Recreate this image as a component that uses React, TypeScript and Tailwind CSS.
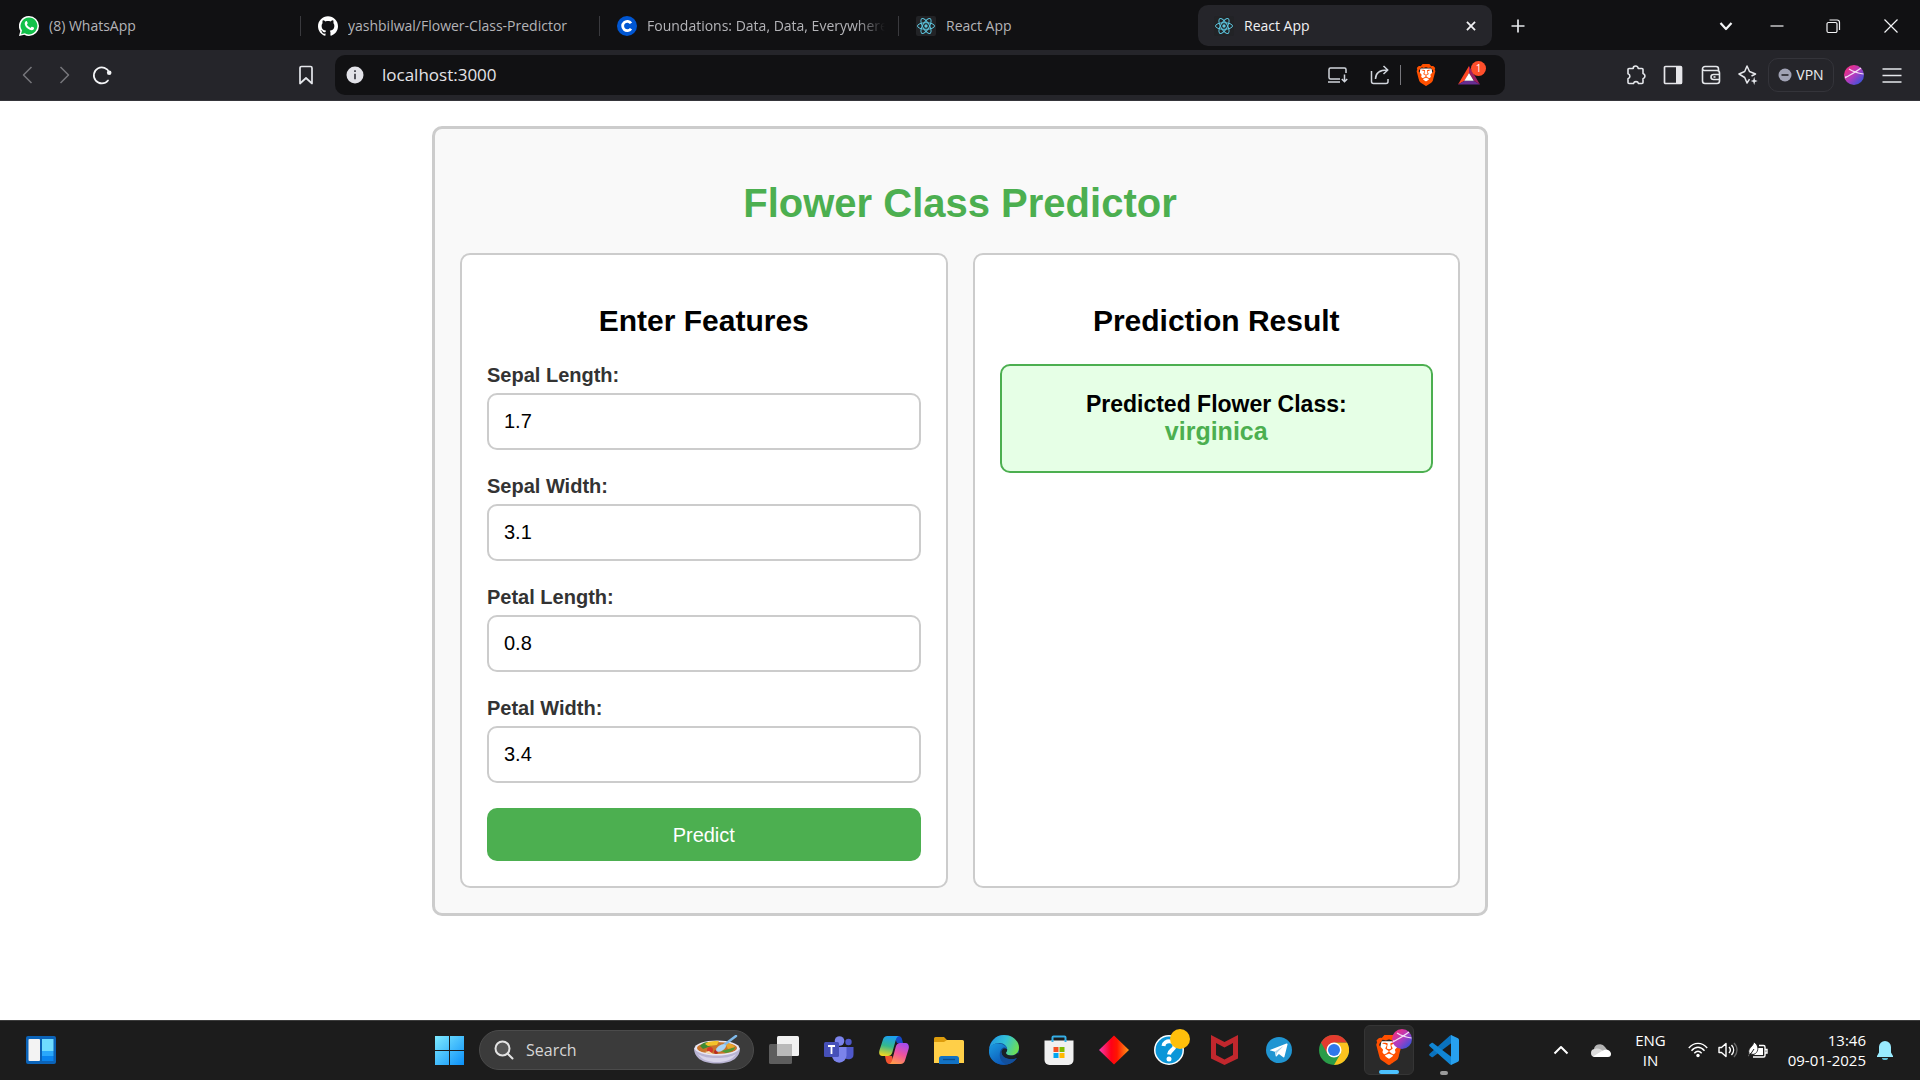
import { useState } from "react";
import type { ReactNode } from "react";
import { SiBrave, SiGithub } from "react-icons/si";

/* ---------- browser icons ---------- */

function WhatsAppIcon() {
  return (
    <svg viewBox="0 0 20 20" className="size-5 shrink-0">
      <path d="M10 0a10 10 0 0 1 0 20 10 10 0 0 1-4.700-1.200L0 20l1.300-5A10 10 0 0 1 10 0z" fill="#fff" />
      <path d="M10 1.400a8.500 8.500 0 1 1-4.300 15.900L2 18.200l1-3.600A8.500 8.500 0 0 1 10 1.400z" fill="#12c14a" />
      <path
        d="M6.700 5.200c.4-.4 1-.4 1.200.1l.8 1.700c.1.400-.1.700-.8 1.500.9 1.700 2 2.700 3.700 3.400.9-1.100 1.100-1.300 1.500-1.100l1.700.8c.4.3.4 1.200-.2 1.800-1 1-2.500 1-4.400 0C8 12.300 6.500 10.600 5.900 8.700c-.4-1.400 0-2.700.8-3.500z"
        fill="#fff"
      />
    </svg>
  );
}

function CourseraIcon() {
  return (
    <svg viewBox="0 0 20 20" className="size-5 shrink-0">
      <circle cx="10" cy="10" r="10" fill="#0056d2" />
      <path d="M14 7.300a4.600 4.600 0 1 0 0 5.400" fill="none" stroke="#fff" strokeWidth="2.800" />
    </svg>
  );
}

function ReactIcon() {
  return (
    <svg viewBox="0 0 20 20" className="size-5 shrink-0">
      <rect width="20" height="20" rx="2" fill="#222326" />
      <g fill="none" stroke="#5cc5de" strokeWidth="1">
        <ellipse cx="10" cy="10" rx="8.500" ry="3.300" />
        <ellipse cx="10" cy="10" rx="8.500" ry="3.300" transform="rotate(60 10 10)" />
        <ellipse cx="10" cy="10" rx="8.500" ry="3.300" transform="rotate(120 10 10)" />
      </g>
      <circle cx="10" cy="10" r="1.700" fill="#5cc5de" />
    </svg>
  );
}

function Line({ d, className, width = 1.5 }: { d: string; className: string; width?: number }) {
  return (
    <svg viewBox="0 0 20 20" className={className} fill="none" stroke="currentColor" strokeWidth={width}>
      <path d={d} strokeLinejoin="round" />
    </svg>
  );
}

function ReloadIcon() {
  return (
    <svg viewBox="0 0 20 20" className="size-5 text-gray-100" fill="none" stroke="currentColor" strokeWidth="1.700">
      <path d="M17.300 7.500A8 8 0 1 0 16 15.500" strokeLinecap="round" />
      <circle cx="17.200" cy="7.800" r="2.300" fill="currentColor" stroke="none" />
    </svg>
  );
}

function InfoIcon() {
  return (
    <svg viewBox="0 0 18 18" className="size-[18px]">
      <circle cx="9" cy="9" r="8.500" fill="#e2e2e8" />
      <path d="M9 4.200v1.800M9 7.700v5.600" stroke="#3a3a42" strokeWidth="1.700" />
    </svg>
  );
}

function InstallIcon() {
  return (
    <svg viewBox="0 0 22 18" className="h-[18px] w-[22px] text-gray-300" fill="none" stroke="currentColor" strokeWidth="1.500">
      <path d="M13 13H3.500A1.500 1.500 0 0 1 2 11.500v-8A1.500 1.500 0 0 1 3.500 2h14A1.500 1.500 0 0 1 19 3.500V7M1 16h12M17.500 8.500v7M14.800 13l2.700 2.700 2.700-2.700" />
    </svg>
  );
}

function ShareIcon() {
  return (
    <svg viewBox="0 0 20 20" className="size-5 text-gray-300" fill="none" stroke="currentColor" strokeWidth="1.500">
      <path d="M1.500 6v10.500a2 2 0 0 0 2 2H16a2 2 0 0 0 2-2V14M5.500 14c0-5 3-9 12-9M13.500 1l4.300 4-4.300 4" strokeLinejoin="round" />
    </svg>
  );
}

function BraveLion({ className }: { className: string }) {
  return (
    <span className={`relative grid place-items-center ${className}`}>
      <svg viewBox="0 0 24 24" className="absolute size-full">
        <path d="M6 5h12l1 5-2 7-5 4-5-4-2-7z" fill="#fff" />
      </svg>
      <SiBrave className="relative size-full text-[#ff5000]" />
    </span>
  );
}

function RewardsIcon() {
  return (
    <svg viewBox="0 0 22 20" className="h-5 w-[22px]">
      <path d="M11 1 0 19.500l6.500-3.700L11 8z" fill="#ff4724" />
      <path d="M0 19.500h22l-6-3.700H6.500z" fill="#662d91" />
      <path d="M11 1l11 18.500-6-3.700L11 8z" fill="#9e1f63" />
      <path d="M11 8l4.800 7.800H6.300z" fill="#fff" />
    </svg>
  );
}

function PuzzleIcon() {
  return (
    <svg viewBox="0 0 20 20" className="size-5 text-gray-200" fill="none" stroke="currentColor" strokeWidth="1.600">
      <path
        d="M3 3.500h4.200a2.500 2.500 0 0 1 5 0H16a1 1 0 0 1 1 1v4a2.700 2.700 0 0 1 0 5.200V17.500a1 1 0 0 1-1 1h-3.500a2.600 2.600 0 0 0-5 0H3a1 1 0 0 1-1-1v-3.700a2.600 2.600 0 0 0 0-5V4.500a1 1 0 0 1 1-1z"
        strokeLinejoin="round"
      />
    </svg>
  );
}

function SidebarIcon() {
  return (
    <svg viewBox="0 0 20 20" className="size-5">
      <rect x="1.500" y="1.500" width="17" height="17" rx="1" fill="none" stroke="#e6e6ea" strokeWidth="1.700" />
      <path d="M13 1.500h5.500v17H13z" fill="#e6e6ea" />
    </svg>
  );
}

function WalletIcon() {
  return (
    <svg viewBox="0 0 20 20" className="size-5 text-gray-200" fill="none" stroke="currentColor" strokeWidth="1.600">
      <path d="M17.500 5.500V4A2.500 2.500 0 0 0 15 1.500H4A2.500 2.500 0 0 0 1.500 4m0 0A2 2 0 0 0 3.500 5.500H16A2.500 2.500 0 0 1 18.500 8v8a2.500 2.500 0 0 1-2.500 2.500H4A2.500 2.500 0 0 1 1.500 16V4M18.500 9.500h-6a2.500 2.500 0 0 0 0 5h6" />
      <path d="M12.500 12h2" />
    </svg>
  );
}

function SparkleIcon() {
  return (
    <svg viewBox="0 0 20 20" className="size-5 text-gray-200" fill="none" stroke="currentColor" strokeWidth="1.500">
      <path d="M11.500 14.200 9 18l-2.300-5.500L1 9l5.700-2.500L9 1l2.500 5.500L17.500 9l-4 2" strokeLinejoin="round" />
      <path d="M16.200 11.800 17 15l2.700 1-2.700 1-.8 3-.9-3-2.500-1 2.500-1z" fill="currentColor" stroke="none" />
    </svg>
  );
}

function PlanetAvatar({ className }: { className: string }) {
  return (
    <svg viewBox="0 0 20 20" className={className}>
      <defs>
        <linearGradient id="planet" x1="0.100" y1="0.100" x2="0.900" y2="0.900">
          <stop offset="0.150" stopColor="#e2318f" />
          <stop offset="0.500" stopColor="#b13cc0" />
          <stop offset="0.900" stopColor="#4a4fd6" />
        </linearGradient>
      </defs>
      <circle cx="10" cy="10" r="10" fill="url(#planet)" />
      <path d="M1 13C6 10 12 7 17 3M5 4c3 2 7 4 14.500 5M1 12l3-.500" fill="none" stroke="#f3dff5" strokeWidth="1.200" />
    </svg>
  );
}

/* ---------- browser chrome ---------- */

function Tab({ icon, title, first, fade }: { icon: ReactNode; title: string; first?: boolean; fade?: boolean }) {
  return (
    <button
      type="button"
      className={`flex min-w-0 flex-1 items-center gap-2.5 pr-3.5 text-left ${first ? "max-w-[301px] pl-[19px]" : "max-w-[299px] pl-[17px]"}`}
    >
      {icon}
      <span
        className={`min-w-0 flex-1 overflow-hidden whitespace-nowrap ${fade ? "[mask-image:linear-gradient(to_right,black_88%,transparent)]" : ""}`}
      >
        {title}
      </span>
    </button>
  );
}

function Separator() {
  return <span className="-ml-px h-5 w-px shrink-0 bg-[#3a3a3e]" />;
}

function TabStrip() {
  return (
    <div className="flex h-[50px] items-center bg-[#111113] pt-px text-sm text-[#b4b4b8]">
      <Tab first icon={<WhatsAppIcon />} title="(8) WhatsApp" />
      <Separator />
      <Tab icon={<SiGithub className="size-5 shrink-0 text-white" />} title="yashbilwal/Flower-Class-Predictor" />
      <Separator />
      <Tab icon={<CourseraIcon />} title="Foundations: Data, Data, Everywhere" fade />
      <Separator />
      <Tab icon={<ReactIcon />} title="React App" />
      <div className="flex h-[41px] min-w-0 max-w-[294px] flex-1 items-center gap-2.5 rounded-[10px] bg-[#25252a] pl-4 pr-3 text-[#f0f0f2]">
        <ReactIcon />
        <span className="flex-1 truncate">React App</span>
        <button type="button" aria-label="Close tab">
          <Line d="M5.500 5.500l9 9M14.500 5.500l-9 9" width={2} className="size-[18px]" />
        </button>
      </div>
      <button type="button" aria-label="New tab" className="ml-4 text-gray-200">
        <Line d="M10 3.500v13M3.500 10h13" width={1.700} className="size-5" />
      </button>
      <div className="ml-auto flex items-center pr-[19px] text-gray-100">
        <button type="button" aria-label="Search tabs" className="mr-[31px]">
          <Line d="M4.500 7l5.500 6 5.500-6" width={2.200} className="size-5" />
        </button>
        <button type="button" aria-label="Minimize" className="mr-9">
          <Line d="M3.500 10h13" width={1.200} className="size-5" />
        </button>
        <button type="button" aria-label="Restore" className="mr-[38px]">
          <Line
            d="M5.500 6.500h7a1.500 1.500 0 0 1 1.500 1.500v7a1.500 1.500 0 0 1-1.500 1.500h-7A1.500 1.500 0 0 1 4 15V8a1.500 1.500 0 0 1 1.500-1.500zM6.500 4h7.500A2.500 2.500 0 0 1 16.500 6.500V14"
            width={1.200}
            className="size-5"
          />
        </button>
        <button type="button" aria-label="Close window">
          <Line d="M3.500 3.500l13 13M16.500 3.500l-13 13" width={1.200} className="size-5" />
        </button>
      </div>
    </div>
  );
}

function AddressBar() {
  return (
    <div className="flex h-[51px] items-center border-b border-[#35353a] bg-[#25252a] pb-px">
      <div className="flex w-[335px] shrink-0 items-center pl-[18px] pr-[19px]">
        <button type="button" aria-label="Back" className="text-[#77777c]">
          <Line d="M13.500 2 5.500 10l8 8" className="size-5" />
        </button>
        <button type="button" aria-label="Forward" className="ml-4 text-[#77777c]">
          <Line d="M6.500 2l8 8-8 8" className="size-5" />
        </button>
        <button type="button" aria-label="Reload" className="ml-[18px]">
          <ReloadIcon />
        </button>
        <button type="button" aria-label="Bookmark" className="ml-auto text-gray-200">
          <Line d="M4 3a1.500 1.500 0 0 1 1.500-1.500h9A1.500 1.500 0 0 1 16 3v15.500L10 13l-6 5.500z" width={1.700} className="size-5" />
        </button>
      </div>
      <div className="flex h-10 max-w-[1170px] flex-1 items-center rounded-[10px] bg-[#111113] pl-[11px] pr-[25px]">
        <InfoIcon />
        <input
          aria-label="Address"
          defaultValue="localhost:3000"
          className="ml-[18px] min-w-0 flex-1 bg-transparent text-[17px] text-[#e4e4e8] outline-none"
        />
        <button type="button" aria-label="Install app">
          <InstallIcon />
        </button>
        <button type="button" aria-label="Share" className="ml-[21px]">
          <ShareIcon />
        </button>
        <span className="ml-2.5 h-5 w-px bg-[#77777c]" />
        <button type="button" aria-label="Brave Shields" className="ml-3.5">
          <BraveLion className="size-[22px]" />
        </button>
        <button type="button" aria-label="Brave Rewards" className="relative ml-[21px]">
          <RewardsIcon />
          <span className="absolute -right-1.5 -top-1 grid size-[15px] place-items-center rounded-full bg-[#ff4f2b] text-[10px] leading-none text-white">
            1
          </span>
        </button>
      </div>
      <div className="ml-auto flex items-center pr-[18px]">
        <button type="button" aria-label="Extensions" className="mr-[17px]">
          <PuzzleIcon />
        </button>
        <button type="button" aria-label="Sidebar" className="mr-[18px]">
          <SidebarIcon />
        </button>
        <button type="button" aria-label="Wallet" className="mr-[17px]">
          <WalletIcon />
        </button>
        <button type="button" aria-label="Leo AI" className="mr-2.5">
          <SparkleIcon />
        </button>
        <button
          type="button"
          className="mr-2.5 flex h-[34px] w-[66px] items-center justify-center gap-1 rounded-[10px] border border-[#34343a] text-sm text-[#ededf0]"
        >
          <svg viewBox="0 0 14 14" className="size-3.5">
            <circle cx="7" cy="7" r="6.500" fill="#a0a2b4" />
            <path d="M3.500 7h7" stroke="#25252a" strokeWidth="1.600" />
          </svg>
          VPN
        </button>
        <button type="button" aria-label="Profile" className="mr-[18px]">
          <PlanetAvatar className="size-5" />
        </button>
        <button type="button" aria-label="Menu" className="text-gray-200">
          <Line d="M0.500 4h19M0.500 10.500h19M0.500 17h19" className="size-5" />
        </button>
      </div>
    </div>
  );
}

/* ---------- page ---------- */

const FIELDS = [
  { id: "sepal-length", label: "Sepal Length:", value: "1.7" },
  { id: "sepal-width", label: "Sepal Width:", value: "3.1" },
  { id: "petal-length", label: "Petal Length:", value: "0.8" },
  { id: "petal-width", label: "Petal Width:", value: "3.4" },
];

function Panel({ title, children }: { title: string; children: ReactNode }) {
  return (
    <section className="min-w-0 flex-1 rounded-[10px] border-2 border-[#ccc] bg-white p-[25px]">
      <h2 className="mb-[26px] mt-6 text-center text-[30px] font-bold leading-[34px] text-black">{title}</h2>
      {children}
    </section>
  );
}

function Predictor() {
  const [values, setValues] = useState(FIELDS.map((f) => f.value));
  return (
    <div className="mx-auto w-full max-w-[1056px] rounded-[10px] border-[3px] border-[#ccc] bg-[#f9f9f9] p-[25px] font-['Liberation_Sans',Arial,sans-serif]">
      <h1 className="my-[26px] text-center text-[40px] font-bold leading-[47px] text-[#4caf50]">
        Flower Class Predictor
      </h1>
      <div className="flex gap-[25px]">
        <Panel title="Enter Features">
          <form onSubmit={(e) => e.preventDefault()}>
            {FIELDS.map((f, i) => (
              <div key={f.id} className="mb-[25px]">
                <label htmlFor={f.id} className="mb-1.5 block text-xl font-bold leading-[23px] text-[#333]">
                  {f.label}
                </label>
                <input
                  id={f.id}
                  inputMode="decimal"
                  value={values[i]}
                  onChange={(e) => setValues(values.map((v, j) => (j === i ? e.target.value : v)))}
                  className="block h-[57px] w-full rounded-[10px] border-2 border-[#ccc] bg-white px-[15px] text-xl text-black outline-none"
                />
              </div>
            ))}
            <button
              type="submit"
              className="block h-[53px] w-full rounded-[10px] bg-[#4caf50] text-xl text-white"
            >
              Predict
            </button>
          </form>
        </Panel>
        <Panel title="Prediction Result">
          <div className="rounded-[10px] border-2 border-[#4caf50] bg-[#e6ffe6] p-[25px] text-center font-bold">
            <h3 className="text-[23px] leading-[26px] text-black">Predicted Flower Class:</h3>
            <p className="text-[25px] leading-[29px] text-[#4caf50]">virginica</p>
          </div>
        </Panel>
      </div>
    </div>
  );
}

/* ---------- taskbar icons ---------- */

function WidgetsIcon() {
  return (
    <svg viewBox="0 0 30 28" className="h-7 w-[30px]">
      <rect width="30" height="28" rx="2" fill="#0b63b8" />
      <rect x="2.500" y="3" width="11.500" height="22" rx="1" fill="#f3f3f3" />
      <path d="M16 3h11.500v12H16z" fill="#6fdcff" />
      <path d="M16 15h11.500v5H16z" fill="#2aa8fb" />
      <path d="M16 20h11.500v5H16z" fill="#0a84ee" />
    </svg>
  );
}

function StartIcon() {
  return (
    <svg viewBox="0 0 29 29" className="size-[29px]">
      <defs>
        <linearGradient id="start" x1="0" y1="0" x2="1" y2="1">
          <stop offset="0" stopColor="#7eeaff" />
          <stop offset="1" stopColor="#0b90f9" />
        </linearGradient>
      </defs>
      <path d="M0 0h14v14H0zM15 0h14v14H15zM0 15h14v14H0zM15 15h14v14H15z" fill="url(#start)" />
    </svg>
  );
}

function BowlIcon() {
  return (
    <svg viewBox="0 0 46 30" className="h-[30px] w-[46px]">
      <path d="M0 13c0 9 7 15.500 23 15.500S46 22 46 13z" fill="#b9b4d3" />
      <path d="M4 19c4 6 10 8 19 8s15-2 19-8c-5 3-11 4-19 4s-14-1-19-4z" fill="#d9d5ea" />
      <ellipse cx="23" cy="13" rx="22.500" ry="7.500" fill="#e9e6f2" />
      <ellipse cx="23" cy="13" rx="20" ry="6" fill="#c8742c" />
      <path d="M6 11c3-4 7-4 9-4l2 4-8 3z" fill="#3d8a33" />
      <path d="M11 9c3-3 8-3 14-3l-2 4-9 1z" fill="#f3c22c" />
      <path d="M27 16l8-2 6-2c0 3-4 5-9 6z" fill="#4f9b35" />
      <path d="M31 8c5 0 9 2 10 4l-7 2z" fill="#e8a62b" />
      <circle cx="16" cy="15" r="3" fill="#d5372a" />
      <circle cx="22" cy="17" r="2" fill="#b72a22" />
      <path d="M11 17c2 1.500 5 2 8 2l-4-3z" fill="#f5e3b5" />
      <path d="M30 10 42 1" stroke="#7fb9ea" strokeWidth="2.500" strokeLinecap="round" />
      <ellipse cx="27" cy="13" rx="5.500" ry="2.800" fill="#a8d4f6" transform="rotate(-30 27 13)" />
    </svg>
  );
}

function TaskViewIcon() {
  return (
    <svg viewBox="0 0 30 28" className="h-7 w-[30px]">
      <rect y="8" width="23" height="20" rx="1.500" fill="#5d5d5d" />
      <rect x="8" width="22" height="20" rx="1.500" fill="#f1f1f1" />
      <path d="M8 8h15v12H8z" fill="#b9b9b9" />
    </svg>
  );
}

function TeamsIcon() {
  return (
    <svg viewBox="0 0 30 28" className="h-7 w-[30px]">
      <circle cx="24.500" cy="6" r="3.200" fill="#4f58ca" />
      <path d="M20 11h9.500v7.500a4.800 4.800 0 0 1-9.500 1z" fill="#4f58ca" />
      <circle cx="15.500" cy="5" r="4.800" fill="#7b83eb" />
      <path d="M8 11h14.500v8.500a7.200 7.200 0 0 1-14.500 0z" fill="#7b83eb" />
      <rect y="6" width="15" height="15" rx="1.500" fill="#4650b8" />
      <path d="M4 10h7M7.500 10v8" stroke="#fff" strokeWidth="1.800" />
    </svg>
  );
}

function CopilotIcon() {
  return (
    <svg viewBox="0 0 30 28" className="h-7 w-[30px]">
      <defs>
        <linearGradient id="cop-a" x1="0.500" y1="0" x2="0.300" y2="1">
          <stop offset="0" stopColor="#1b9ff1" />
          <stop offset="0.500" stopColor="#35b98c" />
          <stop offset="1" stopColor="#f5d720" />
        </linearGradient>
        <linearGradient id="cop-b" x1="0.700" y1="0" x2="0.300" y2="1">
          <stop offset="0" stopColor="#a54cf0" />
          <stop offset="0.500" stopColor="#f0539d" />
          <stop offset="1" stopColor="#ff9a4b" />
        </linearGradient>
      </defs>
      <path d="M15 0h4.500c2 0 3 1.500 3.600 3.500L24 7h-6z" fill="#1549c9" />
      <path d="M15 28h-4.500c-2 0-3-1.500-3.600-3.500L6 20h7z" fill="#f1532f" />
      <path d="M8.500 0H20c-1.800.6-2.600 2-3.200 4l-3.500 12.500C12.600 19 11 20 9 20H3.500C.5 20-.3 17.500.4 14.500L4 3.500C4.700 1.500 6 0 8.500 0z" fill="url(#cop-a)" />
      <path d="M21.500 28H10c1.800-.6 2.600-2 3.200-4l3.500-13c.7-2.500 2.300-4 4.300-4h5.500c3 0 3.900 3 3.100 6L26 24.500c-.7 2-2 3.500-4.500 3.500z" fill="url(#cop-b)" />
    </svg>
  );
}

function ExplorerIcon() {
  return (
    <svg viewBox="0 0 30 28" className="h-7 w-[30px]">
      <path d="M0 2.500A1.500 1.500 0 0 1 1.500 1H10l3 3v5H0z" fill="#dd9c0c" />
      <path d="M0 6h10l3-2h15.500A1.500 1.500 0 0 1 30 5.500V27H0z" fill="#ffcf48" />
      <path d="M5 28v-5.500A2.500 2.500 0 0 1 7.500 20h15a2.500 2.500 0 0 1 2.500 2.500V28z" fill="#1272c4" />
      <path d="M9 23.500h12" stroke="#0a4c8c" strokeWidth="1.300" />
    </svg>
  );
}

function EdgeIcon() {
  return (
    <svg viewBox="0 0 30 30" className="size-[30px]">
      <defs>
        <linearGradient id="edge-top" x1="0" y1="0.300" x2="1" y2="0.600">
          <stop offset="0" stopColor="#2196e3" />
          <stop offset="0.500" stopColor="#33c2d6" />
          <stop offset="1" stopColor="#6fe04f" />
        </linearGradient>
        <linearGradient id="edge-left" x1="0" y1="0" x2="0.600" y2="1">
          <stop offset="0" stopColor="#1b9de2" />
          <stop offset="1" stopColor="#0c59b8" />
        </linearGradient>
      </defs>
      <circle cx="15" cy="15" r="15" fill="#124a92" />
      <path d="M0 15C1 6 7 0 15 0c8.500 0 15 6 15 12.500 0 5-3.500 8-8 8-3 0-5-1-5-2.500 0-1 1.200-1.500 1.200-3.500C18.200 11 15 8 10.500 8 5 8 1 11 0 15z" fill="url(#edge-top)" />
      <path d="M0 15C1 11 4 8.500 9 8.500c5 0 9 3 9.200 6-1.200-2-3-2.500-4.700-1.500-4 2.500-4.500 13 5 16C9 32-1 25 0 15z" fill="url(#edge-left)" />
      <path d="M18.200 14.500c0 2-1.200 2.500-1.200 3.500 0 1.500 2 2.500 5 2.500 2.500 0 4.500-.8 6-2.300L30 22l-2 1c-4 2.500-15 1.500-15.500-5.500 0-3 2.500-5.500 5.700-3z" fill="#1c1c1c" opacity="0.900" />
      <path d="M12.500 17c0 6 8 9 15.500 6-3 4-6 6-10 6.500C11 28 9 20 12.500 17z" fill="#124f9c" />
      <path d="M30 18.500l-1.500 5c-.3-.8-1-.8-2-.3l1.500-5z" fill="#1c1c1c" />
    </svg>
  );
}

function StoreIcon() {
  return (
    <svg viewBox="0 0 30 30" className="size-[30px]">
      <path d="M8.500 8V2.500A1 1 0 0 1 9.500 1.500h11a1 1 0 0 1 1 1V8" fill="none" stroke="#35aee6" strokeWidth="2" />
      <path d="M.5 5.500h29V25a5 5 0 0 1-5 5h-19a5 5 0 0 1-5-5z" fill="#f0f0f0" />
      <path d="M8.500 7V5M21.500 5v2" fill="none" stroke="#35aee6" strokeWidth="2" />
      <path d="M9.500 12h5v5h-5z" fill="#f25022" />
      <path d="M15.500 12h5v5h-5z" fill="#7fba00" />
      <path d="M9.500 18h5v5h-5z" fill="#00a4ef" />
      <path d="M15.500 18h5v5h-5z" fill="#ffb900" />
    </svg>
  );
}

function DiamondIcon() {
  return (
    <svg viewBox="0 0 30 30" className="size-[30px]">
      <defs>
        <linearGradient id="diamond" x1="0" y1="0" x2="1" y2="0">
          <stop offset="0" stopColor="#f53bb4" />
          <stop offset="0.400" stopColor="#ff0018" />
          <stop offset="0.600" stopColor="#ff1500" />
          <stop offset="1" stopColor="#ff9a1a" />
        </linearGradient>
      </defs>
      <path d="M15 .5 30 15 15 29.500 0 15z" fill="url(#diamond)" />
    </svg>
  );
}

function HelpIcon() {
  return (
    <svg viewBox="-6 0 42 42" className="size-[42px]">
      <circle cx="15" cy="21" r="15" fill="#fff" />
      <circle cx="15" cy="21" r="13.500" fill="#0b96d8" />
      <path d="M9.500 17c.5-6.500 12-6 11 .5-.5 3.500-5 3.500-5.500 8" fill="none" stroke="#fff" strokeWidth="4" />
      <circle cx="15" cy="30" r="2.500" fill="#fff" />
      <circle cx="26" cy="10" r="10" fill="#ffbf0b" />
    </svg>
  );
}

function McAfeeIcon() {
  return (
    <svg viewBox="0 0 27 30" className="h-[30px] w-[27px]">
      <path d="M0 0l13.500 7L27 0v23.500L13.500 30 0 23.500zM5 8v12l8.500 4.500L22 20V8l-8.500 4.500z" fill="#c1272d" fillRule="evenodd" />
    </svg>
  );
}

function TelegramIcon() {
  return (
    <svg viewBox="0 0 26 26" className="size-[26px]">
      <circle cx="13" cy="13" r="13" fill="#2095d2" />
      <path d="M4.500 12.800 20.500 6.500c.8-.3 1.200.2 1 1L18.500 19.500c-.2 1-.9 1.100-1.600.6l-4-3-2.200 2.200c-.5.4-.9.2-1-.4l-.8-4.200-4.300-1.200c-.8-.2-.8-.5-.1-.7z" fill="#fff" />
      <path d="M9 14.600 17.500 9l-6.700 7-.6 2.500z" fill="#a9d3ea" />
    </svg>
  );
}

function ChromeIcon() {
  return (
    <svg viewBox="0 0 30 30" className="size-[30px]">
      <circle cx="15" cy="15" r="15" fill="#2a9c48" />
      <path d="M15 7.500h13A15 15 0 0 1 15 30l6.500-11.200z" fill="#fcc31e" />
      <path d="M2 7.500A15 15 0 0 1 28 7.500H15L8.500 18.800z" fill="#e33b2e" />
      <circle cx="15" cy="15" r="7.500" fill="#fff" />
      <circle cx="15" cy="15" r="6" fill="#2f78ea" />
    </svg>
  );
}

function VSCodeIcon() {
  return (
    <svg viewBox="0 0 30 30" className="size-[30px]">
      <path d="M.5 20.500 2.500 22c.5.4 1 .4 1.500 0L22.500 8V0c-.6 0-1.200.3-1.700.8L.6 18.800c-.6.5-.6 1.200-.1 1.700z" fill="#0a72be" />
      <path d="M.5 9.500 2.500 8c.5-.4 1-.4 1.500 0l18.500 14v8c-.6 0-1.200-.3-1.700-.8L.6 11.200c-.6-.5-.6-1.200-.1-1.700z" fill="#1186d4" />
      <path d="M22 .1 29 3.300c.6.300 1 .9 1 1.600v20.200c0 .7-.4 1.300-1 1.600l-7 3.200z" fill="#27a0ee" />
    </svg>
  );
}

function BraveTaskIcon() {
  return (
    <span className="relative">
      <BraveLion className="size-[30px]" />
      <span className="absolute -right-2 -top-1.5">
        <PlanetAvatar className="size-5" />
      </span>
    </span>
  );
}

const TASKS: { name: string; icon: ReactNode; state?: "active" | "open" }[] = [
  { name: "Task view", icon: <TaskViewIcon /> },
  { name: "Teams", icon: <TeamsIcon /> },
  { name: "Copilot", icon: <CopilotIcon /> },
  { name: "File Explorer", icon: <ExplorerIcon /> },
  { name: "Edge", icon: <EdgeIcon /> },
  { name: "Store", icon: <StoreIcon /> },
  { name: "Diamond", icon: <DiamondIcon /> },
  { name: "Help", icon: <HelpIcon /> },
  { name: "McAfee", icon: <McAfeeIcon /> },
  { name: "Telegram", icon: <TelegramIcon /> },
  { name: "Chrome", icon: <ChromeIcon /> },
  { name: "Brave", icon: <BraveTaskIcon />, state: "active" },
  { name: "Visual Studio Code", icon: <VSCodeIcon />, state: "open" },
];

function Tray() {
  return (
    <div className="flex items-center justify-self-end text-[15px] leading-5 text-white">
      <button type="button" aria-label="Hidden icons" className="mr-5">
        <Line d="M3.500 13.500l6.500-6.500 6.500 6.500" width={2} className="size-5" />
      </button>
      <svg viewBox="0 0 20 13" className="mr-6 h-[13px] w-5">
        <path d="M3 7a6 6 0 0 1 11-4l3 4-6 4H2z" fill="#b4b4b4" />
        <path d="M4 5a4 4 0 0 0 0 8l8-6c-2-2-5-3-8-2z" fill="#dcdcdc" />
        <path d="M2 12.500 11 7c5-3 9 0 9 3a3 3 0 0 1-3 3H4z" fill="#fff" />
      </svg>
      <button type="button" className="mr-[22px] text-center">
        ENG
        <br />
        IN
      </button>
      <button type="button" aria-label="Network, sound and battery" className="mr-5 flex items-center gap-2.5">
        <svg viewBox="0 0 20 16" className="h-4 w-5" fill="none" stroke="#fff" strokeWidth="1.400">
          <path d="M.8 6C6-.2 14-.2 19.200 6M3.500 8.700c4-4.700 9-4.700 13 0M6.300 11.300c2.500-2.800 4.900-2.800 7.400 0" />
          <circle cx="10" cy="13.500" r="1.700" fill="#fff" stroke="none" />
        </svg>
        <svg viewBox="0 0 20 16" className="h-4 w-5" fill="none" stroke="#fff" strokeWidth="1.400">
          <path d="M1 5.500h2.500L8 1.500v13l-4.500-4H1z" strokeLinejoin="round" />
          <path d="M11 5c1.600 1.700 1.600 4.300 0 6M13.500 3c2.800 3 2.800 7 0 10" />
          <path d="M16 1c4 4 4 10 0 14" stroke="#666" />
        </svg>
        <svg viewBox="0 0 20 17" className="h-[17px] w-5" fill="none" stroke="#fff" strokeWidth="1.400">
          <path d="M11 3.500h4.500A1.500 1.500 0 0 1 17 5v8.500a1.500 1.500 0 0 1-1.500 1.500H5M17 7.500h2v3.500h-2" />
          <path d="M10 6h5v7H6z" fill="#fff" stroke="none" />
          <path d="M6 0c4 3 5 7 2.500 10.500C7 12.500 4 13 2 11.500L.5 15 0 14l1-3C-.5 6 5 5 6 0z" fill="#fff" stroke="#1c1c1c" strokeWidth=".8" />
          <path d="M2 13l4-6" stroke="#1c1c1c" strokeWidth="1" />
        </svg>
      </button>
      <button type="button" className="mr-[11px] text-right">
        13:46
        <br />
        09-01-2025
      </button>
      <svg viewBox="0 0 16 19" className="h-[19px] w-4">
        <path d="M8 0a6 6 0 0 1 6 6v5.500l2 3.500v1H0v-1l2-3.500V6a6 6 0 0 1 6-6z" fill="#99ebff" />
        <path d="M5 17h6a3 2 0 0 1-6 0z" fill="#5fbcd6" />
      </svg>
    </div>
  );
}

function Taskbar() {
  return (
    <footer className="grid h-[60px] grid-cols-[1fr_auto_1fr] items-center border-t border-[#3c3c3c] bg-[#1c1c1c] pb-px pr-[27px]">
      <button type="button" aria-label="Widgets" className="ml-[26px] justify-self-start">
        <WidgetsIcon />
      </button>
      <div className="flex items-center gap-[5px]">
        <button type="button" aria-label="Start" className="grid size-[50px] place-items-center">
          <StartIcon />
        </button>
        <label className="flex h-10 w-[275px] items-center rounded-full border border-[#4b4b4b] bg-[#3b3b3b] pl-3.5 pr-[13px]">
          <svg viewBox="0 0 20 20" className="size-5 shrink-0" fill="none" stroke="#e3e3e3" strokeWidth="2">
            <circle cx="8.500" cy="8.500" r="7" fill="#565656" />
            <path d="M13.500 13.500l5 5" strokeLinecap="round" />
          </svg>
          <input
            aria-label="Search"
            placeholder="Search"
            className="ml-3 min-w-0 flex-1 bg-transparent text-base text-white outline-none placeholder:text-[#d6d6d6]"
          />
          <BowlIcon />
        </label>
        {TASKS.map((t) => (
          <button
            key={t.name}
            type="button"
            aria-label={t.name}
            className={`relative grid size-[50px] place-items-center rounded-md ${t.state === "active" ? "border border-[#353535] bg-[#2a2a2a]" : ""}`}
          >
            {t.icon}
            {t.state === "active" && <span className="absolute bottom-0 h-1 w-5 rounded-full bg-[#4cc2ff]" />}
            {t.state === "open" && <span className="absolute bottom-0 h-1 w-2 rounded-full bg-[#9a9a9a]" />}
          </button>
        ))}
      </div>
      <Tray />
    </footer>
  );
}

export default function App() {
  return (
    <div className="flex min-h-screen flex-col bg-white font-['Open_Sans','Noto_Sans',sans-serif]">
      <header>
        <TabStrip />
        <AddressBar />
      </header>
      <main className="flex-1 py-[25px]">
        <Predictor />
      </main>
      <Taskbar />
    </div>
  );
}
